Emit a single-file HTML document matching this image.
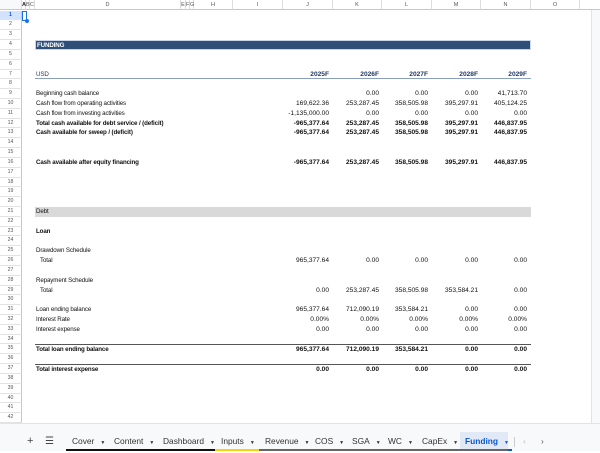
<!DOCTYPE html>
<html><head><meta charset="utf-8">
<style>
*{margin:0;padding:0;box-sizing:border-box}
body{width:600px;height:451px;overflow:hidden;background:#fff;font-family:"Liberation Sans",sans-serif;position:relative;font-size:6.6px;color:#111}
.a{position:absolute}
.ch{position:absolute;top:0;height:10px;border-right:1px solid #dadce0;border-bottom:1px solid #c8c8c8;background:#fff;color:#555;font-size:5.5px;text-align:center;line-height:10px}
.rh{position:absolute;left:0;width:22px;height:9.82px;border-right:1px solid #c8c8c8;border-bottom:1px solid #e3e3e3;color:#555;font-size:5.2px;text-align:center;line-height:9.8px;background:#fff}
.r{position:absolute;left:35px;width:496px;height:9.82px;line-height:9.82px}
.r span{position:absolute;top:0}
.l{left:1px;font-size:6.2px;letter-spacing:-0.12px}
.v{text-align:right;width:46px}
.b{font-weight:bold}
.tab{position:absolute;top:432px;height:19px;line-height:19px;font-size:8.4px;color:#333}
.tab i{font-style:normal;font-size:5px;margin-left:6px}
</style></head><body>
<div class="ch" style="left:0;width:22px;background:#f8f9fa"></div>
<div class="ch" style="left:22px;width:4px;font-weight:bold;color:#222">A</div>
<div class="ch" style="left:26px;width:4px">B</div>
<div class="ch" style="left:30px;width:5px">C</div>
<div class="ch" style="left:35px;width:146px">D</div>
<div class="ch" style="left:181px;width:5px">E</div>
<div class="ch" style="left:186px;width:4px">F</div>
<div class="ch" style="left:190px;width:4px">G</div>
<div class="ch" style="left:194px;width:39px">H</div>
<div class="ch" style="left:233px;width:50px">I</div>
<div class="ch" style="left:283px;width:50px">J</div>
<div class="ch" style="left:333px;width:49px">K</div>
<div class="ch" style="left:382px;width:50px">L</div>
<div class="ch" style="left:432px;width:49px">M</div>
<div class="ch" style="left:481px;width:50px">N</div>
<div class="ch" style="left:531px;width:49px">O</div>
<div class="ch" style="left:580px;width:20px;border-right:none"></div>
<div class="a" style="left:591px;top:10px;width:9px;height:414px;background:#f8f9fa;border-left:1px solid #e3e3e3"></div>
<div class="rh" style="top:10.6px;background:#d3e3fd;color:#0b57d0;font-weight:bold">1</div>
<div class="rh" style="top:20.42px">2</div><div class="rh" style="top:30.24px">3</div><div class="rh" style="top:40.06px">4</div><div class="rh" style="top:49.88px">5</div><div class="rh" style="top:59.7px">6</div><div class="rh" style="top:69.52px">7</div><div class="rh" style="top:79.34px">8</div><div class="rh" style="top:89.16px">9</div><div class="rh" style="top:98.98px">10</div><div class="rh" style="top:108.8px">11</div><div class="rh" style="top:118.62px">12</div><div class="rh" style="top:128.44px">13</div><div class="rh" style="top:138.26px">14</div><div class="rh" style="top:148.08px">15</div><div class="rh" style="top:157.9px">16</div><div class="rh" style="top:167.72px">17</div><div class="rh" style="top:177.54px">18</div><div class="rh" style="top:187.36px">19</div><div class="rh" style="top:197.18px">20</div><div class="rh" style="top:207px">21</div><div class="rh" style="top:216.82px">22</div><div class="rh" style="top:226.64px">23</div><div class="rh" style="top:236.46px">24</div><div class="rh" style="top:246.28px">25</div><div class="rh" style="top:256.1px">26</div><div class="rh" style="top:265.92px">27</div><div class="rh" style="top:275.74px">28</div><div class="rh" style="top:285.56px">29</div><div class="rh" style="top:295.38px">30</div><div class="rh" style="top:305.2px">31</div><div class="rh" style="top:315.02px">32</div><div class="rh" style="top:324.84px">33</div><div class="rh" style="top:334.66px">34</div><div class="rh" style="top:344.48px">35</div><div class="rh" style="top:354.3px">36</div><div class="rh" style="top:364.12px">37</div><div class="rh" style="top:373.94px">38</div><div class="rh" style="top:383.76px">39</div><div class="rh" style="top:393.58px">40</div><div class="rh" style="top:403.4px">41</div><div class="rh" style="top:413.22px">42</div>
<div class="a" style="left:22px;top:10.6px;width:5px;height:10px;border:1.5px solid #1a73e8"></div>
<div class="a" style="left:24.5px;top:19px;width:4px;height:4px;border-radius:50%;background:#1a73e8"></div>

<div class="r b" style="top:40.06px;background:#2f4e78;color:#fff;border:1px solid #c9d6ea;line-height:9px"><span class="l">FUNDING</span></div>
<div class="r" style="top:69.52px;color:#1f3864;font-weight:bold;border-bottom:1px solid #8aa0bf"><span class="l" style="font-weight:normal">USD</span>
<span class="v" style="left:248px">2025F</span><span class="v" style="left:298px">2026F</span><span class="v" style="left:347px">2027F</span><span class="v" style="left:397px">2028F</span><span class="v" style="left:446px">2029F</span></div>

<div class="r" style="top:89.16px"><span class="l">Beginning cash balance</span><span class="v" style="left:298px">0.00</span><span class="v" style="left:347px">0.00</span><span class="v" style="left:397px">0.00</span><span class="v" style="left:446px">41,713.70</span></div>
<div class="r" style="top:98.98px"><span class="l">Cash flow from operating activities</span><span class="v" style="left:248px">169,622.36</span><span class="v" style="left:298px">253,287.45</span><span class="v" style="left:347px">358,505.98</span><span class="v" style="left:397px">395,297.91</span><span class="v" style="left:446px">405,124.25</span></div>
<div class="r" style="top:108.8px"><span class="l">Cash flow from investing activities</span><span class="v" style="left:238px;width:56px">-1,135,000.00</span><span class="v" style="left:298px">0.00</span><span class="v" style="left:347px">0.00</span><span class="v" style="left:397px">0.00</span><span class="v" style="left:446px">0.00</span></div>
<div class="r b" style="top:118.62px"><span class="l">Total cash available for debt service / (deficit)</span><span class="v" style="left:248px">-965,377.64</span><span class="v" style="left:298px">253,287.45</span><span class="v" style="left:347px">358,505.98</span><span class="v" style="left:397px">395,297.91</span><span class="v" style="left:446px">446,837.95</span></div>
<div class="r b" style="top:128.44px"><span class="l">Cash available for sweep / (deficit)</span><span class="v" style="left:248px">-965,377.64</span><span class="v" style="left:298px">253,287.45</span><span class="v" style="left:347px">358,505.98</span><span class="v" style="left:397px">395,297.91</span><span class="v" style="left:446px">446,837.95</span></div>
<div class="r b" style="top:157.9px"><span class="l">Cash available after equity financing</span><span class="v" style="left:248px">-965,377.64</span><span class="v" style="left:298px">253,287.45</span><span class="v" style="left:347px">358,505.98</span><span class="v" style="left:397px">395,297.91</span><span class="v" style="left:446px">446,837.95</span></div>

<div class="r" style="top:207px;background:#d9d9d9"><span class="l">Debt</span></div>
<div class="r b" style="top:226.64px"><span class="l">Loan</span></div>
<div class="r" style="top:246.28px"><span class="l">Drawdown Schedule</span></div>
<div class="r" style="top:256.1px"><span class="l" style="left:5px">Total</span><span class="v" style="left:248px">965,377.64</span><span class="v" style="left:298px">0.00</span><span class="v" style="left:347px">0.00</span><span class="v" style="left:397px">0.00</span><span class="v" style="left:446px">0.00</span></div>
<div class="r" style="top:275.74px"><span class="l">Repayment Schedule</span></div>
<div class="r" style="top:285.56px"><span class="l" style="left:5px">Total</span><span class="v" style="left:248px">0.00</span><span class="v" style="left:298px">253,287.45</span><span class="v" style="left:347px">358,505.98</span><span class="v" style="left:397px">353,584.21</span><span class="v" style="left:446px">0.00</span></div>
<div class="r" style="top:305.2px"><span class="l">Loan ending balance</span><span class="v" style="left:248px">965,377.64</span><span class="v" style="left:298px">712,090.19</span><span class="v" style="left:347px">353,584.21</span><span class="v" style="left:397px">0.00</span><span class="v" style="left:446px">0.00</span></div>
<div class="r" style="top:315.02px"><span class="l">Interest Rate</span><span class="v" style="left:248px">0.00%</span><span class="v" style="left:298px">0.00%</span><span class="v" style="left:347px">0.00%</span><span class="v" style="left:397px">0.00%</span><span class="v" style="left:446px">0.00%</span></div>
<div class="r" style="top:324.84px"><span class="l">Interest expense</span><span class="v" style="left:248px">0.00</span><span class="v" style="left:298px">0.00</span><span class="v" style="left:347px">0.00</span><span class="v" style="left:397px">0.00</span><span class="v" style="left:446px">0.00</span></div>
<div class="r b" style="top:344.48px;border-top:1px solid #555"><span class="l">Total loan ending balance</span><span class="v" style="left:248px">965,377.64</span><span class="v" style="left:298px">712,090.19</span><span class="v" style="left:347px">353,584.21</span><span class="v" style="left:397px">0.00</span><span class="v" style="left:446px">0.00</span></div>
<div class="r b" style="top:364.12px;border-top:1px solid #555"><span class="l">Total interest expense</span><span class="v" style="left:248px">0.00</span><span class="v" style="left:298px">0.00</span><span class="v" style="left:347px">0.00</span><span class="v" style="left:397px">0.00</span><span class="v" style="left:446px">0.00</span></div>

<div class="a" style="left:0;top:423px;width:600px;height:9px;background:#f8f9fa;border-top:1px solid #e3e3e3"></div>
<div class="a" style="left:0;top:432px;width:600px;height:19px;background:#f8f9fa"></div>
<div class="tab" style="left:27px;font-size:11px;color:#444">+</div>
<div class="tab" style="left:45px;font-size:10px;color:#444">☰</div>
<div class="tab" style="left:72px">Cover<i>▼</i></div>
<div class="tab" style="left:114px">Content<i>▼</i></div>
<div class="tab" style="left:163px">Dashboard<i>▼</i></div>
<div class="tab" style="left:221px">Inputs<i>▼</i></div>
<div class="tab" style="left:265px">Revenue<i>▼</i></div>
<div class="tab" style="left:315px">COS<i>▼</i></div>
<div class="tab" style="left:352px">SGA<i>▼</i></div>
<div class="tab" style="left:388px">WC<i>▼</i></div>
<div class="tab" style="left:422px">CapEx<i>▼</i></div>
<div class="a" style="left:460px;top:432px;width:48px;height:17px;background:#e1e9f7"></div>
<div class="tab" style="left:465px;color:#0b57d0;font-weight:bold">Funding<i>▼</i></div>
<div class="a" style="left:514px;top:437px;width:1px;height:10px;background:#ccc"></div>
<div class="tab" style="left:523px;color:#bbb">‹</div>
<div class="tab" style="left:541px;color:#555">›</div>
<div class="a" style="left:66px;top:449px;width:149px;height:2px;background:#111"></div>
<div class="a" style="left:215px;top:449px;width:44px;height:2px;background:#f6d40a"></div>
<div class="a" style="left:259px;top:449px;width:249px;height:2px;background:#666"></div>
<div class="a" style="left:508px;top:449px;width:4px;height:2px;background:#0b57d0"></div>
</body></html>
